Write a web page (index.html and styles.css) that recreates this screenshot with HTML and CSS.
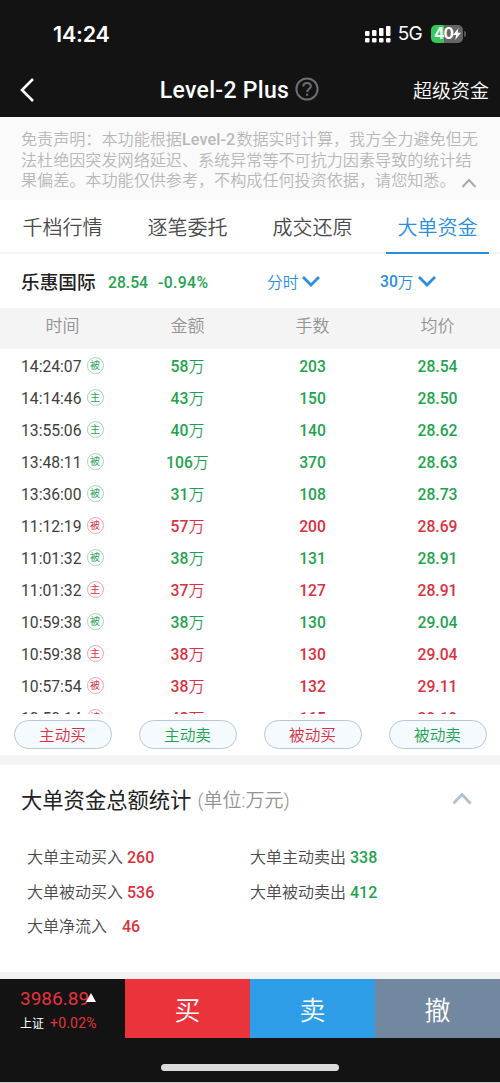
FILE: index.html
```html
<!DOCTYPE html>
<html lang="zh-CN">
<head>
    <meta charset="UTF-8">
    <meta name="viewport" content="width=device-width, initial-scale=1.0">
    <title>Level-2 Plus</title>
    <link rel="stylesheet" href="styles.css">
</head>
<body>
    <header>
        <div class="status-bar">
            <span class="clock">14:24</span>
            <div class="status-icons">
                <svg width="26" height="18" viewBox="0 0 26 18" fill="#fff">
                    <rect x="0" y="6" width="4.5" height="5" rx="1"/>
                    <rect x="7" y="5" width="4.5" height="6" rx="1"/>
                    <rect x="14" y="3" width="4.5" height="8" rx="1"/>
                    <rect x="21" y="1" width="4.5" height="10" rx="1"/>
                    <rect x="0" y="13" width="4.5" height="4.5" rx="1.2"/>
                    <rect x="7" y="13" width="4.5" height="4.5" rx="1.2"/>
                    <rect x="14" y="13" width="4.5" height="4.5" rx="1.2"/>
                    <rect x="21" y="13" width="4.5" height="4.5" rx="1.2"/>
                </svg>
                <span class="network">5G</span>
                <div class="battery">
                    <span>40</span>
                    <svg width="8" height="12" viewBox="0 0 8 12" fill="#fff"><path d="M5.5 0 0 7h3.2L2.2 12 8 4.8H4.6z"/></svg>
                </div>
            </div>
        </div>
        <nav class="nav-bar">
            <svg class="back" width="16" height="26" viewBox="0 0 16 26" fill="none" stroke="#fff" stroke-width="2.6"><path d="M13 2 2 13l11 11"/></svg>
            <div class="title">
                <span>Level-2 Plus</span>
                <svg width="24" height="24" viewBox="0 0 24 24" fill="none" stroke="#6c6e72" stroke-width="2">
                    <circle cx="12" cy="12" r="10.6"/>
                    <path d="M8.3 9.6c0-2.2 1.6-3.6 3.7-3.6s3.8 1.3 3.8 3.3c0 2.6-3.7 2.7-3.7 5.6"/>
                    <path d="M12.1 16.6v2.2"/>
                </svg>
            </div>
            <a class="nav-link">超级资金</a>
        </nav>
    </header>

    <div class="notice">
        免责声明：本功能根据<b>Level-2</b>数据实时计算，我方全力避免但无<br>法杜绝因突发网络延迟、系统异常等不可抗力因素导致的统计结<br>果偏差。本功能仅供参考，不构成任何投资依据，请您知悉。
        <svg width="16" height="10" viewBox="0 0 16 10" fill="none" stroke="#aaa" stroke-width="2"><path d="M1.500 9 8 2l6.500 7"/></svg>
    </div>

    <div class="tabs">
        <div class="tab">千档行情</div>
        <div class="tab">逐笔委托</div>
        <div class="tab">成交还原</div>
        <div class="tab active">大单资金</div>
    </div>

    <div class="quote">
        <span class="stock-name">乐惠国际</span>
        <span class="price">28.54</span>
        <span class="change">-0.94%</span>
        <div class="select period">分时<svg width="18" height="12" viewBox="0 0 18 12"><path d="M1 2l8 8 8-8"/></svg></div>
        <div class="select amount"><b>30</b>万<svg width="18" height="12" viewBox="0 0 18 12"><path d="M1 2l8 8 8-8"/></svg></div>
    </div>

    <div class="table-head">
        <div>时间</div><div>金额</div><div>手数</div><div>均价</div>
    </div>
    <div class="table-body" id="rows"></div>

    <div class="filters">
        <div class="pill red">主动买</div>
        <div class="pill green">主动卖</div>
        <div class="pill red">被动买</div>
        <div class="pill green">被动卖</div>
    </div>

    <section class="summary">
        <div class="summary-title">
            <h2>大单资金总额统计</h2>
            <span>(单位:万元)</span>
            <svg width="20" height="13" viewBox="0 0 20 13" fill="none" stroke="#b3c0cd" stroke-width="2.800"><path d="M1.500 11.500 10 2.500l8.500 9"/></svg>
        </div>
        <div class="summary-grid">
            <div>大单主动买入<b class="red">260</b></div>
            <div>大单主动卖出<b class="green">338</b></div>
            <div>大单被动买入<b class="red">536</b></div>
            <div>大单被动卖出<b class="green">412</b></div>
            <div>大单净流入<b class="red net">46</b></div>
        </div>
    </section>

    <footer>
        <div class="trade-bar">
            <div class="index">
                <div class="index-value">3986.89<svg width="10" height="9" viewBox="0 0 10 9" fill="#fff"><path d="M5 0l5 9H0z"/></svg></div>
                <div class="index-change"><span>上证</span>+0.02%</div>
            </div>
            <div class="btn buy">买</div>
            <div class="btn sell">卖</div>
            <div class="btn cancel">撤</div>
        </div>
        <div class="home-indicator"></div>
    </footer>

    <script>
        // time, side, amount, lots, price, color
        const rows = [
            ['14:24:07', '被', 58, 203, '28.54', 'green'],
            ['14:14:46', '主', 43, 150, '28.50', 'green'],
            ['13:55:06', '主', 40, 140, '28.62', 'green'],
            ['13:48:11', '被', 106, 370, '28.63', 'green'],
            ['13:36:00', '被', 31, 108, '28.73', 'green'],
            ['11:12:19', '被', 57, 200, '28.69', 'red'],
            ['11:01:32', '被', 38, 131, '28.91', 'green'],
            ['11:01:32', '主', 37, 127, '28.91', 'red'],
            ['10:59:38', '被', 38, 130, '29.04', 'green'],
            ['10:59:38', '主', 38, 130, '29.04', 'red'],
            ['10:57:54', '被', 38, 132, '29.11', 'red'],
            ['10:50:14', '被', 48, 165, '29.19', 'red']
        ];

        document.getElementById('rows').innerHTML = rows.map(([time, side, amount, lots, price, color]) => `
            <div class="row ${color}">
                <div class="time">${time}<i>${side}</i></div>
                <div>${amount}<span class="unit">万</span></div>
                <div>${lots}</div>
                <div>${price}</div>
            </div>`).join('');
    </script>
</body>
</html>
```
FILE: styles.css
```css
:root {
    --dark: #131313;
    --red: #dc3040;
    --green: #1fa351;
    --blue: #2b8de0;
    --line: #f4f4f4;
}

* {
    box-sizing: border-box;
}

body {
    margin: 0;
    width: 500px;
    height: 1083px;
    display: flex;
    flex-direction: column;
    overflow: hidden;
    background: #fff;
    color: #4a4a4a;
    font-family: Roboto, "Noto Sans CJK SC", sans-serif;
    font-weight: 350;
    white-space: nowrap;
}

svg {
    display: block;
    flex: none;
}

.red {
    color: var(--red);
}

.green {
    color: var(--green);
}

header {
    height: 117px;
    flex: none;
    background: var(--dark);
    color: #fff;
}

.status-bar {
    height: 62px;
    padding: 5px 37px 0 53px;
    display: flex;
    align-items: center;
    justify-content: space-between;
}

.clock {
    font: 600 21.5px/26px Inter, sans-serif;
    letter-spacing: -0.2px;
}

.status-icons {
    display: flex;
    align-items: center;
}

.network {
    margin-left: 7px;
    font: 400 19px/22px Inter, sans-serif;
    letter-spacing: -0.8px;
}

.battery {
    position: relative;
    width: 32px;
    height: 18px;
    margin-left: 9px;
    padding-left: 3px;
    display: flex;
    align-items: center;
    border-radius: 5px;
    background: linear-gradient(90deg, #35c759 40%, #656565 40%);
    font: 700 15.5px/18px Inter, sans-serif;
    letter-spacing: -1px;
}

.battery::after {
    content: '';
    position: absolute;
    right: -3px;
    top: 6px;
    width: 2px;
    height: 6px;
    border-radius: 0 2px 2px 0;
    background: #555;
}

.nav-bar {
    height: 55px;
    padding: 0 11px 0 20px;
    display: grid;
    grid-template-columns: 100px 1fr 130px;
    align-items: center;
}

.title {
    display: flex;
    align-items: center;
    justify-content: center;
    gap: 6px;
    font-size: 23px;
    font-weight: 500;
    letter-spacing: 0.3px;
}

.title span {
    padding-top: 2px;
}

.title svg {
    margin-top: -1px;
}

.nav-link {
    text-align: right;
    font-size: 19px;
}

.notice {
    position: relative;
    height: 83px;
    flex: none;
    padding: 13px 0 0 21px;
    background: #fafafa;
    color: #b8b8b8;
    font-size: 16.1px;
    line-height: 20.5px;
}

.notice b {
    margin-right: 1px;
    font-weight: 500;
    letter-spacing: 0.15px;
}

.notice svg {
    position: absolute;
    right: 23px;
    top: 61px;
}

.tabs {
    height: 54px;
    flex: none;
    display: grid;
    grid-template-columns: repeat(4, 1fr);
    border-bottom: 2px solid var(--line);
}

.tab {
    height: 54px;
    text-align: center;
    font-size: 20px;
    line-height: 56px;
}

.tab.active {
    margin: 0 11px;
    color: var(--blue);
    border-bottom: 2px solid var(--blue);
}

.quote {
    height: 54px;
    flex: none;
    padding: 2px 0 0 21px;
    display: flex;
    align-items: center;
    color: var(--green);
    font-size: 15.7px;
    font-weight: 500;
}

.stock-name {
    width: 87px;
    padding-bottom: 3px;
    color: #222;
    font-size: 18.7px;
    font-weight: 500;
}

.price {
    width: 50px;
}

.change {
    width: 109px;
    letter-spacing: 0.4px;
}

.select {
    display: flex;
    align-items: center;
    gap: 4px;
    padding-bottom: 2px;
    color: var(--blue);
    font-size: 15.7px;
    font-weight: 350;
}

.select b {
    margin-right: -4px;
    font-weight: 500;
}

.period {
    width: 113px;
}

.select svg {
    fill: none;
    stroke: var(--blue);
    stroke-width: 2.8;
}

.table-head,
.row {
    display: grid;
    grid-template-columns: repeat(4, 1fr);
    text-align: center;
}

.table-head {
    height: 41px;
    flex: none;
    background: #f4f4f4;
    color: #939393;
    font-size: 17px;
    line-height: 36px;
}

.table-body {
    height: 365px;
    flex: none;
    padding-top: 2px;
    overflow: hidden;
}

.row {
    height: 32px;
    font-size: 15.7px;
    font-weight: 500;
    line-height: 32px;
}

.unit {
    font-size: 16px;
    font-weight: 350;
}

.time {
    display: flex;
    align-items: center;
    padding-left: 21px;
    color: #404040;
    font-weight: 400;
}

.time i {
    width: 17px;
    height: 17px;
    margin: 0 0 3px 5px;
    border: 1px solid #9fd6b3;
    border-radius: 50%;
    font-size: 10px;
    font-style: normal;
    line-height: 15px;
    text-align: center;
}

.red .time i {
    border-color: #f0a3aa;
    color: var(--red);
}

.green .time i {
    color: var(--green);
}

.filters {
    height: 41px;
    flex: none;
    padding-top: 6px;
    display: grid;
    grid-template-columns: repeat(4, 1fr);
    justify-items: center;
}

.pill {
    width: 98px;
    height: 29px;
    border: 1px solid #b9c6d8;
    border-radius: 15px;
    background: #f5faff;
    text-align: center;
    font-size: 15.7px;
    line-height: 29px;
}

.summary {
    height: 224px;
    flex: none;
    border-top: 10px solid #f4f4f4;
    border-bottom: 7px solid #f2f2f2;
}

.summary-title {
    height: 67px;
    padding: 0 28px 0 21px;
    display: flex;
    align-items: center;
}

.summary-title h2 {
    margin: 0;
    color: #222;
    font-size: 21.3px;
    font-weight: 400;
}

.summary-title span {
    margin-left: 6px;
    color: #939393;
    font-size: 19px;
}

.summary-title svg {
    margin: -1px 0 0 auto;
}

.summary-grid {
    padding: 7px 0 0 27px;
    display: grid;
    grid-template-columns: 223px 1fr;
    grid-auto-rows: 34.5px;
    align-items: center;
    font-size: 16px;
}

.summary-grid b {
    margin-left: 4px;
    font-size: 16px;
    font-weight: 500;
}

.summary-grid .net {
    margin-left: 15px;
}

footer {
    height: 104px;
    flex: none;
    background: var(--dark);
    border-bottom: 1px solid #ccc;
}

.trade-bar {
    display: grid;
    grid-template: 59px / repeat(4, 1fr);
}

.index {
    padding: 8px 0 0 20px;
    color: #e5333e;
}

.index-value {
    display: flex;
    align-items: center;
    font-size: 19px;
    font-weight: 400;
    line-height: 23px;
}

.index-value svg {
    margin: -2px 0 0 -3px;
}

.index-change {
    margin-top: 3px;
    font-size: 14px;
    font-weight: 400;
    line-height: 20px;
    letter-spacing: 0.2px;
}

.index-change span {
    margin-right: 6px;
    color: #fff;
    font-size: 12px;
    letter-spacing: 0;
}

.btn {
    height: 59px;
    color: #fff;
    text-align: center;
    font-size: 26px;
    line-height: 64px;
}

.buy {
    background: #eb333c;
}

.sell {
    background: #2e9ee9;
}

.cancel {
    background: #7188a0;
}

.home-indicator {
    width: 178px;
    height: 7px;
    margin: 26px auto 0;
    border-radius: 4px;
    background: #dcdcdc;
}
```
